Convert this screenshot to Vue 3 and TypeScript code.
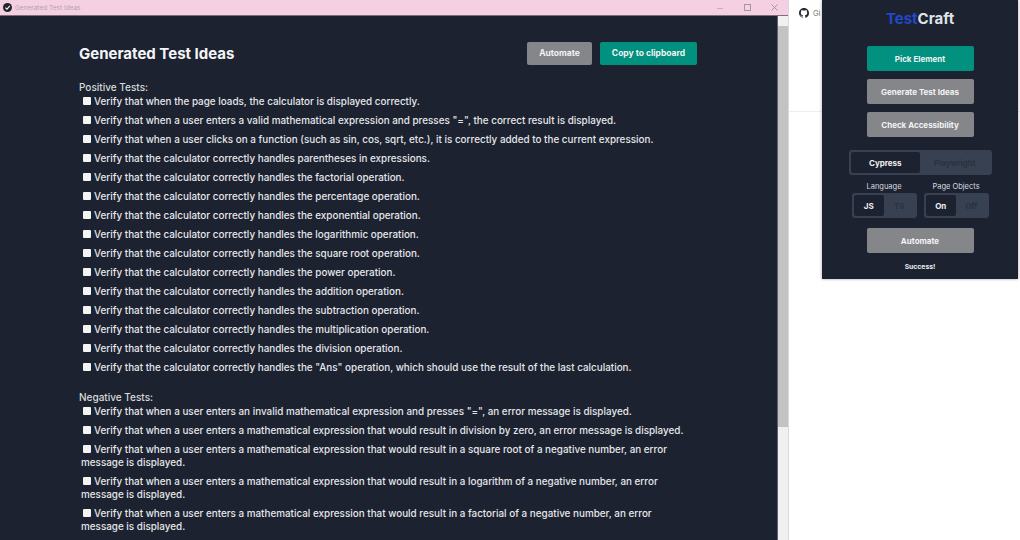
<script setup lang="ts">
const positive: string[] = [
  'Verify that when the page loads, the calculator is displayed correctly.',
  'Verify that when a user enters a valid mathematical expression and presses "=", the correct result is displayed.',
  'Verify that when a user clicks on a function (such as sin, cos, sqrt, etc.), it is correctly added to the current expression.',
  'Verify that the calculator correctly handles parentheses in expressions.',
  'Verify that the calculator correctly handles the factorial operation.',
  'Verify that the calculator correctly handles the percentage operation.',
  'Verify that the calculator correctly handles the exponential operation.',
  'Verify that the calculator correctly handles the logarithmic operation.',
  'Verify that the calculator correctly handles the square root operation.',
  'Verify that the calculator correctly handles the power operation.',
  'Verify that the calculator correctly handles the addition operation.',
  'Verify that the calculator correctly handles the subtraction operation.',
  'Verify that the calculator correctly handles the multiplication operation.',
  'Verify that the calculator correctly handles the division operation.',
  'Verify that the calculator correctly handles the "Ans" operation, which should use the result of the last calculation.',
]
const negative: string[] = [
  'Verify that when a user enters an invalid mathematical expression and presses "=", an error message is displayed.',
  'Verify that when a user enters a mathematical expression that would result in division by zero, an error message is displayed.',
  'Verify that when a user enters a mathematical expression that would result in a square root of a negative number, an error message is displayed.',
  'Verify that when a user enters a mathematical expression that would result in a logarithm of a negative number, an error message is displayed.',
  'Verify that when a user enters a mathematical expression that would result in a factorial of a negative number, an error message is displayed.',
]
const groups = [
  { title: 'Positive Tests:', items: positive },
  { title: 'Negative Tests:', items: negative },
]
</script>

<template>
  <div class="page">
    <section class="window">
      <header class="titlebar">
        <svg class="app-icon" width="9" height="9" viewBox="0 0 10 10">
          <circle cx="5" cy="5" r="5" fill="#20242e" />
          <path d="M2.6 5.1 4.4 6.9 7.6 3.3" fill="none" stroke="#fff" stroke-width="1.2" />
        </svg>
        <span class="window-title">Generated Test Ideas</span>
        <div class="window-controls">
          <svg width="10" height="10" viewBox="0 0 10 10"><path d="M1 5.5h6" stroke="#c3aebb" /></svg>
          <svg width="10" height="10" viewBox="0 0 10 10"><rect x="1.5" y="1.5" width="6" height="6" fill="none" stroke="#a8969f" /></svg>
          <svg width="10" height="10" viewBox="0 0 10 10"><path d="M1.5 1.5l6 6m0-6l-6 6" stroke="#a8969f" /></svg>
        </div>
      </header>
      <div class="window-body">
        <main class="content">
          <div class="heading-row">
            <h1>Generated Test Ideas</h1>
            <div class="actions">
              <button class="btn grey small">Automate</button>
              <button class="btn green small">Copy to clipboard</button>
            </div>
          </div>
          <div v-for="group in groups" :key="group.title" class="group">
            <div class="group-title">{{ group.title }}</div>
            <div v-for="item in group.items" :key="item" class="item">
              <i class="check"></i>{{ item }}
            </div>
          </div>
        </main>
        <aside class="scrollbar">
          <div class="arrow"></div>
          <div class="thumb"></div>
        </aside>
      </div>
    </section>

    <section class="browser">
      <div class="tab">
        <svg width="10" height="10" viewBox="0 0 16 16">
          <path fill="#24292f" d="M8 0C3.58 0 0 3.58 0 8c0 3.54 2.29 6.53 5.47 7.59.4.07.55-.17.55-.38 0-.19-.01-.82-.01-1.49-2.01.37-2.53-.49-2.69-.94-.09-.23-.48-.94-.82-1.13-.28-.15-.68-.52-.01-.53.63-.01 1.08.58 1.23.82.72 1.21 1.87.87 2.33.66.07-.52.28-.87.51-1.07-1.78-.2-3.64-.89-3.64-3.95 0-.87.31-1.59.82-2.15-.08-.2-.36-1.02.08-2.12 0 0 .67-.21 2.2.82.64-.18 1.32-.27 2-.27s1.36.09 2 .27c1.53-1.04 2.2-.82 2.2-.82.44 1.1.16 1.92.08 2.12.51.56.82 1.27.82 2.15 0 3.07-1.87 3.75-3.65 3.95.29.25.54.73.54 1.48 0 1.07-.01 1.93-.01 2.2 0 .21.15.46.55.38A8.01 8.01 0 0 0 16 8c0-4.42-3.58-8-8-8z" />
        </svg>
        <span>Gi</span>
      </div>
      <div class="tab-line"></div>

      <div class="popup">
        <div class="logo"><span class="logo-blue">Test</span>Craft</div>
        <button class="btn green wide">Pick Element</button>
        <button class="btn grey wide">Generate Test Ideas</button>
        <button class="btn grey wide">Check Accessibility</button>
        <div class="segment framework">
          <span class="seg active">Cypress</span>
          <span class="seg">Playwright</span>
        </div>
        <div class="options">
          <div class="option">
            <div class="option-label">Language</div>
            <div class="segment">
              <span class="seg active">JS</span>
              <span class="seg">TS</span>
            </div>
          </div>
          <div class="option">
            <div class="option-label">Page Objects</div>
            <div class="segment">
              <span class="seg active">On</span>
              <span class="seg">Off</span>
            </div>
          </div>
        </div>
        <button class="btn grey wide automate">Automate</button>
        <div class="success">Success!</div>
      </div>
    </section>
  </div>
</template>

<style>
html, body { margin: 0; background: #fff; }
</style>

<style scoped>
.page {
  width: 1020px;
  height: 540px;
  display: flex;
  overflow: hidden;
  font-family: Inter, "Noto Sans", sans-serif;
  color: #e8eaee;
  background: #fff;
}
.window {
  width: 788px;
  flex: none;
  display: flex;
  flex-direction: column;
  border-right: 1px solid #d9d9dc;
}
.titlebar {
  height: 15px;
  flex: none;
  background: #f5cfe2;
  border-bottom: 1px solid #7d6f7a;
  display: flex;
  align-items: center;
  padding-left: 3px;
  gap: 3px;
}
.window-title { font-size: 6.5px; color: #b3a4ae; }
.window-controls {
  margin-left: auto;
  display: flex;
  gap: 17px;
  margin-right: 8px;
}
.window-body { flex: 1; display: flex; min-height: 0; }
.content {
  flex: 1;
  background: #1c2230;
  padding: 26px 0 0 79px;
  overflow: hidden;
}
.heading-row {
  display: flex;
  align-items: center;
  justify-content: space-between;
  width: 618px;
  height: 22px;
}
h1 { margin: 0; font-size: 15px; font-weight: 700; color: #f4f5f7; }
.actions { display: flex; gap: 8px; }
.btn {
  border: 0;
  border-radius: 2px;
  color: #f2f3f5;
  font-family: inherit;
  font-weight: 700;
  display: block;
  padding: 0;
}
.green { background: #01917e; }
.grey { background: #85868a; }
.small { height: 23px; font-size: 8.5px; }
.small.grey { width: 65px; }
.small.green { width: 97px; }
.group { margin-top: 18px; }
.group + .group { margin-top: 15px; }
.group-title {
  font-size: 10px;
  font-weight: 500;
  line-height: 10px;
  color: #d6dbdc;
}
.item {
  width: 612px;
  margin-left: 2px;
  font-size: 9.9px;
  font-weight: 500;
  line-height: 13px;
  padding: 3px 0;
  color: #e6e7ea;
}
.check {
  display: inline-block;
  width: 8px;
  height: 8px;
  margin: 0 3px 0 2px;
  background: #f4f4f4;
  border-radius: 1px;
}
.scrollbar {
  width: 10px;
  flex: none;
  background: #f1f0f1;
  border-left: 1px solid #5e646d;
  display: flex;
  flex-direction: column;
}
.arrow { height: 10px; }
.thumb { height: 401px; background: #c3c2c4; }
.browser {
  flex: 1;
  position: relative;
  background: #fff;
}
.tab {
  height: 26px;
  padding-left: 10px;
  display: flex;
  align-items: center;
  gap: 4px;
  font-size: 7.5px;
  color: #777;
}
.tab-line { height: 85px; border-bottom: 1px solid #eeeeee; }
.popup {
  position: absolute;
  left: 33px;
  top: 0;
  width: 196px;
  height: 279px;
  background: #1c2230;
  box-shadow: 0 0 3px rgba(0, 0, 0, 0.35);
  display: flex;
  flex-direction: column;
  align-items: center;
}
.logo {
  margin-top: 10px;
  font-size: 15px;
  line-height: 18px;
  font-weight: 700;
  color: #dfe3e8;
}
.logo-blue { color: #2148c8; }
.wide { width: 107px; height: 25px; font-size: 8px; margin-top: 8px; }
.logo + .wide { margin-top: 18px; }
.segment {
  display: flex;
  background: #374151;
  border-radius: 3px;
  padding: 2px;
  font-size: 8px;
  font-weight: 700;
}
.seg {
  flex: 1;
  display: flex;
  align-items: center;
  justify-content: center;
  color: #2a3240;
  border-radius: 2px;
}
.seg.active { background: #1c2230; color: #f0f1f3; }
.framework { width: 143px; height: 25px; margin-top: 13px; box-sizing: border-box; }
.options { display: flex; gap: 7px; margin-top: 6px; }
.option { width: 65px; display: flex; flex-direction: column; align-items: center; }
.option-label { font-size: 7.5px; line-height: 12px; color: #d8dbe0; }
.option .segment { width: 65px; height: 25px; box-sizing: border-box; }
.automate { margin-top: 10px; }
.success { margin-top: 9px; font-size: 6.8px; font-weight: 700; color: #eceef0; }
</style>
